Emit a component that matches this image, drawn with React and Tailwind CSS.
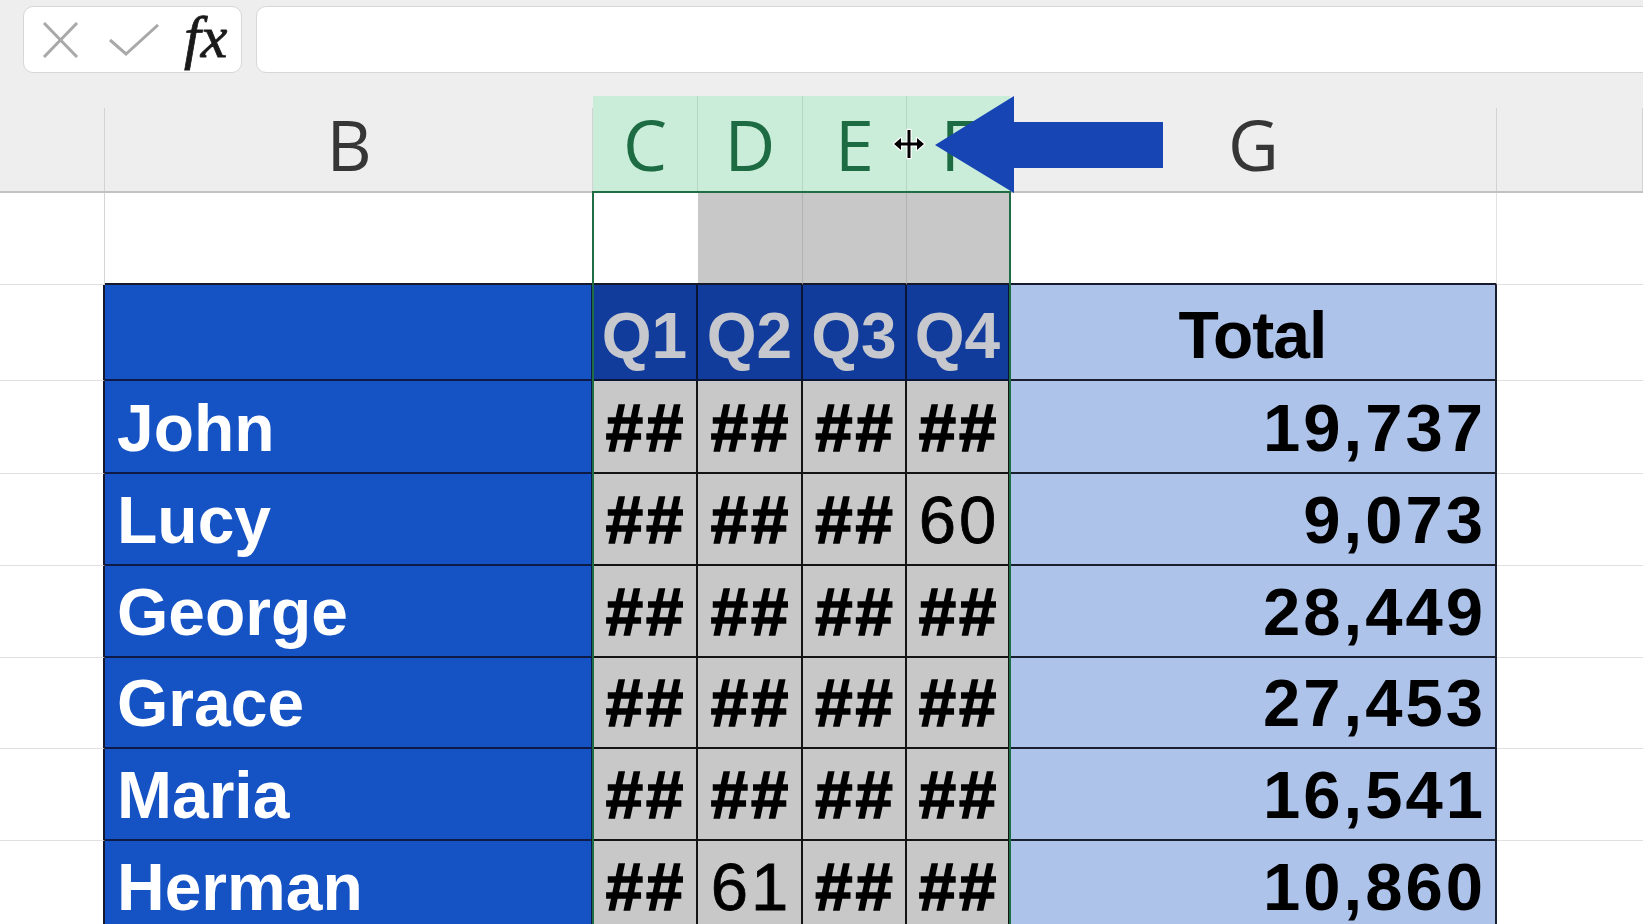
import React from "react";

const GRID = "grid grid-cols-[105px_488px_105px_105px_104px_103px_487px_146px]";
const TF = "font-['Liberation_Sans',Arial,sans-serif]";

const people = [
  { name: "John", q: ["##", "##", "##", "##"], total: "19,737", h: "h-[93px]" },
  { name: "Lucy", q: ["##", "##", "##", "60"], total: "9,073", h: "h-[92px]" },
  { name: "George", q: ["##", "##", "##", "##"], total: "28,449", h: "h-[92px]" },
  { name: "Grace", q: ["##", "##", "##", "##"], total: "27,453", h: "h-[91px]" },
  { name: "Maria", q: ["##", "##", "##", "##"], total: "16,541", h: "h-[92px]" },
  { name: "Herman", q: ["##", "61", "##", "##"], total: "10,860", h: "h-[92px]" },
];

function HeaderCell({ letter, green, last }) {
  if (green) {
    return (
      <div className={`flex items-center justify-center bg-[#c9edd9] ${last ? "" : "border-r border-r-[#b7d5c3]"}`}>
        <span className="font-['Open_Sans',sans-serif] text-[70px] leading-none text-[#1c6b43]">{letter}</span>
      </div>
    );
  }
  return (
    <div className="relative flex items-center justify-center">
      <span className="font-['Open_Sans',sans-serif] text-[70px] leading-none text-[#363636]">{letter}</span>
      <div className="absolute right-0 top-[12px] bottom-0 w-px bg-[#d3d3d3]" />
    </div>
  );
}

function ClearIcon() {
  return (
    <svg width="37" height="36" viewBox="0 0 37 36" fill="none">
      <path d="M2 1 L35 35 M35 1 L2 35" stroke="#a9a9a9" strokeWidth="3" />
    </svg>
  );
}

function CheckIcon() {
  return (
    <svg width="50" height="32" viewBox="0 0 50 32" fill="none">
      <path d="M1 16 L17 30 L49 1" stroke="#a9a9a9" strokeWidth="3" strokeLinejoin="miter" />
    </svg>
  );
}

export default function App() {
  return (
    <div className="relative w-[1643px] h-[924px] overflow-hidden bg-white">
      {/* top: formula bar + column headers */}
      <div className="bg-[#eeeeee]">
        <div className="flex gap-[14px] pl-[23px] pt-[6px] h-[73px]">
          <div className="flex items-center w-[219px] h-[67px] rounded-[10px] border border-[#d7d7d7] bg-white pl-[18px]">
            <ClearIcon />
            <div className="ml-[30px]">
              <CheckIcon />
            </div>
            <span className="ml-[25px] font-['Liberation_Serif',serif] italic text-[60px] leading-none text-[#1a1a1a] pb-[6px] [-webkit-text-stroke:0.8px_#1a1a1a]">fx</span>
          </div>
          <div className="flex-1 h-[67px] -mr-[20px] rounded-[10px] border border-[#d7d7d7] bg-white" />
        </div>
        <div className={`${GRID} mt-[23px] h-[97px] border-b-2 border-b-[#c2c2c2]`}>
          <HeaderCell letter="" />
          <HeaderCell letter="B" />
          <HeaderCell letter="C" green />
          <HeaderCell letter="D" green />
          <HeaderCell letter="E" green />
          <HeaderCell letter="F" green last />
          <HeaderCell letter="G" />
          <HeaderCell letter="" />
        </div>
      </div>

      {/* row 1 */}
      <div className={`${GRID} h-[92px]`}>
        <div className="border-r border-r-[#d4d4d4] border-b border-b-[#e0e0e0]" />
        <div className="border-b-2 border-b-[#15192b] border-r border-r-[#e2e2e2]" />
        <div className="bg-white border-b-2 border-b-[#15192b]" />
        <div className="bg-[#c8c8c8] border-r border-r-[#b2b2b2] border-b-2 border-b-[#15192b]" />
        <div className="bg-[#c8c8c8] border-r border-r-[#b2b2b2] border-b-2 border-b-[#15192b]" />
        <div className="bg-[#c8c8c8] border-b-2 border-b-[#15192b]" />
        <div className="border-b-2 border-b-[#15192b] border-r border-r-[#e2e2e2]" />
        <div className="border-b border-b-[#e0e0e0]" />
      </div>

      {/* table header row */}
      <div className={`${GRID} h-[96px] ${TF} font-bold`}>
        <div className="border-r-2 border-r-[#15192b] border-b border-b-[#e0e0e0]" />
        <div className="bg-[#1552c4] border-r-2 border-b-2 border-[#0d1a45]" />
        {["Q1", "Q2", "Q3", "Q4"].map((q) => (
          <div key={q} className="flex items-end justify-center pb-[11px] bg-[#113c9b] border-r-2 border-b-2 border-[#0a1535]">
            <span className="text-[64px] leading-none text-[#c6c8ce]">{q}</span>
          </div>
        ))}
        <div className="flex items-end justify-center pb-[11px] bg-[#adc3ea] border-r-2 border-b-2 border-[#1a1f2e]">
          <span className="text-[66px] leading-none tracking-[-1px] text-black">Total</span>
        </div>
        <div className="border-b border-b-[#e0e0e0]" />
      </div>

      {/* data rows */}
      {people.map((p) => (
        <div key={p.name} className={`${GRID} ${p.h} ${TF}`}>
          <div className="border-r-2 border-r-[#15192b] border-b border-b-[#e0e0e0]" />
          <div className="flex items-end pl-[12px] pb-[11px] bg-[#1552c4] border-r-2 border-b-2 border-[#0d1a45]">
            <span className="text-[66px] leading-none font-bold text-white">{p.name}</span>
          </div>
          {p.q.map((v, i) => (
            <div key={i} className="flex items-end justify-center pb-[11px] pl-[3px] bg-[#c8c8c8] border-r-2 border-b-2 border-[#141414]">
              {v === "##" ? (
                <span className="text-[67px] leading-none tracking-[3px] font-bold text-black [-webkit-text-stroke:1.6px_#000]">{v}</span>
              ) : (
                <span className="text-[67px] leading-none tracking-[3px] font-normal text-black [-webkit-text-stroke:0.8px_#000]">{v}</span>
              )}
            </div>
          ))}
          <div className="flex items-end justify-end pr-[9px] pb-[11px] bg-[#adc3ea] border-r-2 border-b-2 border-[#1a1f2e]">
            <span className="text-[67px] leading-none font-bold tracking-[3px] text-black">{p.total}</span>
          </div>
          <div className="border-b border-b-[#e0e0e0]" />
        </div>
      ))}

      {/* selection border */}
      <div className="absolute left-[592px] top-[191px] w-[419px] h-[760px] border-2 border-[#1e6d45] pointer-events-none" />

      {/* annotation arrow */}
      <svg className="absolute left-[930px] top-[94px]" width="236" height="102" viewBox="0 0 236 102">
        <polygon points="5,51 84,2 84,28 233,28 233,74 84,74 84,99" fill="#1745b3" />
      </svg>

      {/* resize cursor */}
      <svg className="absolute left-[893px] top-[128px]" width="32" height="32" viewBox="0 0 32 32">
        <g stroke="#ffffff" strokeWidth="2.5" fill="#ffffff" strokeLinejoin="round">
          <rect x="14.5" y="2" width="3" height="28" />
          <rect x="6" y="14.5" width="20" height="3" />
          <polygon points="1,16 8,10 8,22" />
          <polygon points="31,16 24,10 24,22" />
        </g>
        <g fill="#000000">
          <rect x="14.5" y="2" width="3" height="28" />
          <rect x="6" y="14.5" width="20" height="3" />
          <polygon points="1,16 8,10 8,22" />
          <polygon points="31,16 24,10 24,22" />
        </g>
      </svg>
    </div>
  );
}
